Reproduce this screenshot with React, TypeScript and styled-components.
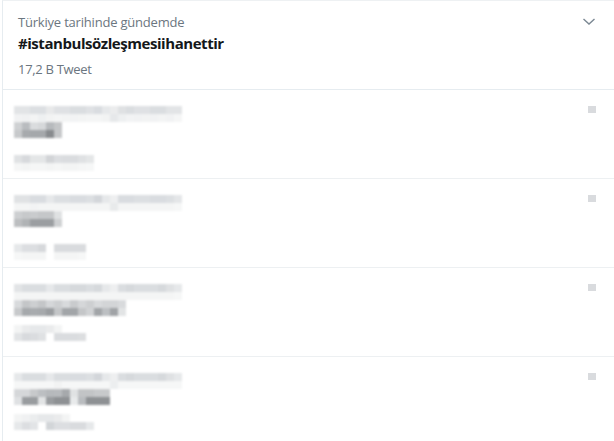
import { createGlobalStyle, styled } from 'styled-components'

const GlobalStyle = createGlobalStyle`
  html, body {
    margin: 0;
    padding: 0;
    background: #ffffff;
  }
  body {
    font-family: 'Open Sans', 'Noto Sans', 'Liberation Sans', sans-serif;
  }
`

const Panel = styled.div`
  width: 612px;
  height: 441px;
  margin-left: 2px;
  border-left: 1px solid #e6ecf0;
  border-top: 1px solid #eef1f3;
  overflow: hidden;
  box-sizing: border-box;
`

const Header = styled.div`
  position: relative;
  padding: 12px 16px 9px 15px;
  border-bottom: 1px solid #e6ecf0;
  height: 89px;
  box-sizing: border-box;
`

const Context = styled.div`
  font-size: 13px;
  line-height: 19px;
  letter-spacing: -0.2px;
  color: #6b7680;
`

const Hashtag = styled.div`
  font-size: 15px;
  line-height: 20px;
  font-weight: 700;
  letter-spacing: -0.45px;
  color: #14171a;
  margin-top: 1px;
`

const Count = styled.div`
  font-size: 13px;
  line-height: 19px;
  letter-spacing: -0.3px;
  color: #6b7680;
  margin-top: 7px;
`

const Caret = styled.svg`
  position: absolute;
  top: 16px;
  right: 18px;
`

const Row = styled.div`
  display: flex;
  justify-content: space-between;
  padding: 16px 18px 0 11px;
  height: 89px;
  box-sizing: border-box;
  border-bottom: 1px solid #edf0f2;
`

const Lines = styled.div`
  display: flex;
  flex-direction: column;
`

const Mosaic = styled.div<{ $gap: number }>`
  display: flex;
  flex-direction: column;
  margin-top: ${p => p.$gap}px;
  filter: blur(0.9px);
`

const CellRow = styled.div`
  display: flex;
`

const Cell = styled.span`
  display: block;
  width: 8px;
  height: 8px;
`

const Dot = styled.span`
  display: block;
  width: 8px;
  height: 7px;
  background: #d9dbde;
  filter: blur(0.5px);
`

type Block = { gap: number; rows: string[][] }
type Item = { label: Block; title: Block; count: Block }

const g = (s: string) => s.split(' ').map(v => (v === '-' ? 'transparent' : '#' + v))

const items: Item[] = [
  {
    label: {
      gap: 0,
      rows: [
        g('e2e4e6 e2e4e6 dcdfe2 dcdfe2 e8e9ea dfe1e4 dfe1e4 dadde0 dadde0 dfe1e4 d9dce0 e6e8ea ebeced dfe1e3 dadde0 dfe1e4 dfe1e4 dadde0 dadde0 e2e4e6 e2e4e6'),
        g('f1f2f3 f0f1f2 f3f4f4 eef0f1 f2f3f3 f4f5f5 f3f4f4 f2f3f4 f3f4f4 f4f5f5 f4f5f5 f2f3f3 e6e8ea eef0f1 f2f3f4 f1f2f3 f2f3f3 f1f2f3 f3f4f4 f1f2f3 f5f6f6')
      ]
    },
    title: {
      gap: 0,
      rows: [
        g('cfd1d3 b9bcbf dadcde d6d8da b7babd c4c6c8'),
        g('c7c9cb a7aaad a5a8ab a5a8ab 888b8e c5c7c9')
      ]
    },
    count: {
      gap: 17,
      rows: [
        g('e0e2e4 d7d9dc e4e6e7 e4e6e7 d2d4d7 dcdee1 dadcdf dadcdf dfe1e3 e4e6e7'),
        g('f5f6f6 f3f4f4 f5f6f6 f5f6f6 f3f4f4 f5f6f6 f3f4f4 f3f4f4 f5f6f6 f6f7f7')
      ]
    }
  },
  {
    label: {
      gap: 0,
      rows: [
        g('e0e2e4 e0e2e4 d9dce0 d9dce0 e6e8ea dcdfe2 dcdfe2 d9dce0 d9dce0 dcdfe2 d3d6da e6e8ea eeeff0 d9dce0 d9dce0 dcdfe2 dcdfe2 d9dce0 d9dce0 dcdfe2 e4e6e8'),
        g('f4f5f5 f4f5f5 f2f3f4 f4f5f5 f4f5f5 f4f5f5 f4f5f5 f4f5f5 f4f5f5 f4f5f5 f4f5f5 f4f5f5 e8eaeb f4f5f5 f4f5f5 f4f5f5 f4f5f5 f4f5f5 f4f5f5 f4f5f5 f6f7f7')
      ]
    },
    title: {
      gap: 0,
      rows: [
        g('cdcfd1 c7c9cb c9cbcd c5c7c9 c5c7c9 dfe1e2'),
        g('bcbec0 b0b3b5 9b9ea1 9b9ea1 9b9ea1 ced0d2')
      ]
    },
    count: {
      gap: 17,
      rows: [
        g('e6e8ea dcdee1 dcdee1 d6d8db - d9dbde d9dbde d9dbde d9dbde'),
        g('f6f7f7 f4f5f5 f4f5f5 f4f5f5 - f4f5f5 f4f5f5 f4f5f5 f6f7f7')
      ]
    }
  },
  {
    label: {
      gap: 0,
      rows: [
        g('e2e4e6 dadde0 dadde0 dadde0 e6e8ea dadde0 dadde0 d6d9dc d6d9dc dadde0 d6d9dc e6e8ea eeeff0 dadde0 d6d9dc dadde0 dadde0 dadde0 d6d9dc dfe1e3 e6e8ea'),
        g('f4f5f5 f4f5f5 f4f5f5 f4f5f5 f4f5f5 f4f5f5 f4f5f5 f4f5f5 f4f5f5 f4f5f5 f4f5f5 f4f5f5 f4f5f5 f4f5f5 f4f5f5 f4f5f5 f4f5f5 f4f5f5 f4f5f5 f4f5f5 f6f7f7')
      ]
    },
    title: {
      gap: 0,
      rows: [
        g('d8dadc c4c6c8 cdcfd1 c4c6c8 d5d7d9 cdcfd1 d8dadc c9cbcd d5d7d9 cdcfd1 d8dadc d3d5d7 d3d5d7 d8dadc'),
        g('c7c9cb a6a9ac a8abae a6a9ac 9a9da0 c4c6c8 a2a5a8 a2a5a8 c4c6c8 d0d2d4 a2a5a8 bcbfc2 a0a3a6 e2e4e5')
      ]
    },
    count: {
      gap: 9,
      rows: [
        g('f3f4f4 eaebec e6e8ea e6e8ea eaebec f3f4f4 - - - -'),
        g('e2e4e6 d8dadd dadcdf dfe1e3 - dadcdf dadcdf dadcdf dcdee0 -')
      ]
    }
  },
  {
    label: {
      gap: 0,
      rows: [
        g('e6e8ea dadde0 dadde0 dadde0 e6e8ea dadde0 dadde0 d9dce0 d9dce0 dcdfe2 d3d6da e6e8ea eeeff0 dadde0 d6d9dc dadde0 dadde0 dadde0 d6d9dc dfe1e3 e6e8ea'),
        g('f6f7f7 f6f7f7 f6f7f7 f6f7f7 f6f7f7 f2f3f3 f6f7f7 f6f7f7 f6f7f7 f6f7f7 f6f7f7 f6f7f7 eceeef f6f7f7 f6f7f7 f6f7f7 f6f7f7 f6f7f7 f6f7f7 f6f7f7 f6f7f7')
      ]
    },
    title: {
      gap: 0,
      rows: [
        g('d5d7d9 d5d7d9 c7c9cb bcbfc2 b6b9bc b7babd a6a9ac e0e2e3 c2c4c6 c2c4c6 c7c9cb c7c9cb'),
        g('dfe1e3 999c9f 999c9f e2e4e5 999c9f 8e9194 8e9194 e8eaeb b9bcbf 8e9194 8e9194 8e9194')
      ]
    },
    count: {
      gap: 9,
      rows: [
        g('f3f4f4 f0f1f2 ebedee e6e8ea e6e8ea eaebec f3f4f4 - - -'),
        g('e6e8ea dcdee1 e2e4e6 - d2d5d8 dcdee1 dcdee1 d9dbde d9dbde e6e8ea')
      ]
    }
  }
]

function Pixels({ block }: { block: Block }) {
  return (
    <Mosaic $gap={block.gap}>
      {block.rows.map((r, i) => (
        <CellRow key={i}>
          {r.map((c, j) => (
            <Cell key={j} style={{ background: c }} />
          ))}
        </CellRow>
      ))}
    </Mosaic>
  )
}

export default function App() {
  return (
    <>
      <GlobalStyle />
      <Panel>
        <Header>
          <Context>Türkiye tarihinde gündemde</Context>
          <Hashtag>#istanbulsözleşmesiihanettir</Hashtag>
          <Count>17,2 B Tweet</Count>
          <Caret width="14" height="9" viewBox="0 0 14 9">
            <polyline points="1.5,2 7,7 12.5,2" fill="none" stroke="#7b8893" strokeWidth="1.4" />
          </Caret>
        </Header>
        {items.map((it, i) => (
          <Row key={i}>
            <Lines>
              <Pixels block={it.label} />
              <Pixels block={it.title} />
              <Pixels block={it.count} />
            </Lines>
            <Dot />
          </Row>
        ))}
      </Panel>
    </>
  )
}
